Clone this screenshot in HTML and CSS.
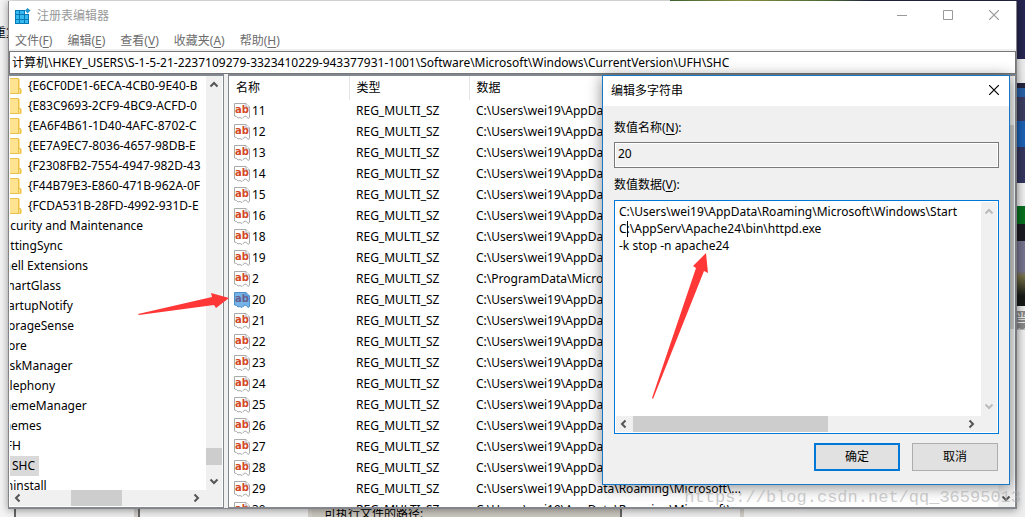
FILE: index.html
```html
<!DOCTYPE html>
<html lang="zh-CN">
<head>
<meta charset="utf-8">
<title>注册表编辑器</title>
<link rel="stylesheet" href="styles.css">
</head>
<body>
<svg class="defs" width="0" height="0" aria-hidden="true">
  <symbol id="ab" viewBox="0 0 16 16">
    <path class="sheet" d="M.5 .5H12L15.5 4V14.500L14 15.500L12.500 13.500L11 13L9 14.500L8 15.500L6 14.500L4 15L2.500 13.500L.5 13Z"/>
    <path class="sheet" d="M12 .5V4H15.500"/>
    <text x="1" y="10" class="ab-text">ab</text>
  </symbol>
  <symbol id="folder" viewBox="0 0 16 16"><path d="M0 1H14V11H16V15.500H0Z" fill="#ffe391"/><path d="M0 .5H12.500V15.500H0M12.500 10.500H14.500V15.500H12.500" fill="none" stroke="#e8c04a"/></symbol>
  <symbol id="up" viewBox="0 0 10 10"><path d="M1.500 6.500L5 3L8.500 6.500" fill="none" stroke="currentColor" stroke-width="2"/></symbol>
  <symbol id="down" viewBox="0 0 10 10"><path d="M1.500 3.500L5 7L8.500 3.500" fill="none" stroke="currentColor" stroke-width="2"/></symbol>
  <symbol id="left" viewBox="0 0 10 10"><path d="M6.500 1.500L3 5L6.500 8.500" fill="none" stroke="currentColor" stroke-width="2"/></symbol>
  <symbol id="right" viewBox="0 0 10 10"><path d="M3.500 1.500L7 5L3.500 8.500" fill="none" stroke="currentColor" stroke-width="2"/></symbol>
  <symbol id="close" viewBox="0 0 10 10"><path d="M0 0L10 10M10 0L0 10" fill="none" stroke="currentColor" stroke-width="1.200"/></symbol>
</svg>

<div class="backdrop" aria-hidden="true">
  <span class="back-text">重复</span>
  <div class="strip-top"></div>
  <div class="strip-right"><i class="navy"></i><i class="pale"></i><i class="site"></i><i class="gap"></i><i class="photo"></i><i class="caption">当前</i><i class="rest"></i></div>
  <div class="strip-bottom"><i></i><i></i><span>可执行文件的路径:</span><i></i></div>
</div>

<main class="window">
  <header class="titlebar">
    <svg class="app-icon" viewBox="0 0 16 16"><path d="M0 2H10V6H14V16H0Z" fill="#0879b5"/><path d="M1 3H4V6H1ZM5 3H9V6H5ZM1 7H4V11H1ZM5 7H9V11H5ZM10 7H13V11H10ZM1 12H4V15H1ZM5 12H9V15H5ZM10 12H13V15H10Z" fill="#35b9f1"/><path d="M12.500 0L15.500 2.500L12.500 5.500L10 2.500Z" fill="#2496d0"/></svg>
    <h1>注册表编辑器</h1>
    <div class="controls">
      <button aria-label="最小化"><svg viewBox="0 0 10 10"><path d="M0 5.500H10" stroke="currentColor"/></svg></button>
      <button aria-label="最大化"><svg viewBox="0 0 10 10"><path d="M.5 .5H9.500V9.500H.5Z" fill="none" stroke="currentColor"/></svg></button>
      <button aria-label="关闭"><svg><use href="#close"/></svg></button>
    </div>
  </header>
  <nav class="menu">
    <button>文件(<u>F</u>)</button><button>编辑(<u>E</u>)</button><button>查看(<u>V</u>)</button><button>收藏夹(<u>A</u>)</button><button>帮助(<u>H</u>)</button>
  </nav>
  <input class="address" aria-label="地址" value="计算机\HKEY_USERS\S-1-5-21-2237109279-3323410229-943377931-1001\Software\Microsoft\Windows\CurrentVersion\UFH\SHC">
  <div class="panes">
    <section class="pane tree-pane">
      <ul class="tree">
        <li class="key"><svg><use href="#folder"/></svg>{E6CF0DE1-6ECA-4CB0-9E40-B</li>
        <li class="key"><svg><use href="#folder"/></svg>{E83C9693-2CF9-4BC9-ACFD-0</li>
        <li class="key"><svg><use href="#folder"/></svg>{EA6F4B61-1D40-4AFC-8702-C</li>
        <li class="key"><svg><use href="#folder"/></svg>{EE7A9EC7-8036-4657-98DB-E</li>
        <li class="key"><svg><use href="#folder"/></svg>{F2308FB2-7554-4947-982D-43</li>
        <li class="key"><svg><use href="#folder"/></svg>{F44B79E3-E860-471B-962A-0F</li>
        <li class="key"><svg><use href="#folder"/></svg>{FCDA531B-28FD-4992-931D-E</li>
        <li>Security and Maintenance</li>
        <li>SettingSync</li>
        <li>Shell Extensions</li>
        <li>SmartGlass</li>
        <li>StartupNotify</li>
        <li>StorageSense</li>
        <li>Store</li>
        <li>TaskManager</li>
        <li>Telephony</li>
        <li>ThemeManager</li>
        <li>Themes</li>
        <li>UFH</li>
        <li class="child"><span>SHC</span></li>
        <li>Uninstall</li>
      </ul>
      <div class="vbar"><svg><use href="#up"/></svg><i class="track"></i><i class="thumb tree-thumb"></i><i class="tree-end"></i><svg><use href="#down"/></svg></div>
      <div class="hbar"><svg><use href="#left"/></svg><i class="h-start"></i><i class="thumb h-thumb"></i><i class="track"></i><svg><use href="#right"/></svg></div>
    </section>
    <section class="pane list-pane">
      <div class="list">
        <table>
          <thead><tr><th>名称</th><th>类型</th><th>数据</th></tr></thead>
          <tbody id="values">
          </tbody>
        </table>
      </div>
      <div class="vbar list-bar"><svg><use href="#up"/></svg><i class="list-start"></i><i class="thumb list-thumb"></i><i class="track"></i><svg><use href="#down"/></svg></div>
    </section>
  </div>
</main>

<form class="dialog" role="dialog" aria-labelledby="dialog-title">
  <header><h2 id="dialog-title">编辑多字符串</h2><button type="button" aria-label="关闭"><svg><use href="#close"/></svg></button></header>
  <div class="dialog-body">
    <label for="value-name">数值名称(<u>N</u>):</label>
    <input id="value-name" value="20" readonly>
    <label for="value-data">数值数据(<u>V</u>):</label>
    <div class="editor">
      <textarea id="value-data" wrap="off" spellcheck="false">C:\Users\wei19\AppData\Roaming\Microsoft\Windows\Start Menu
C:\AppServ\Apache24\bin\httpd.exe
-k stop -n apache24</textarea>
      <div class="vbar disabled"><svg><use href="#up"/></svg><i class="track"></i><svg><use href="#down"/></svg></div>
      <div class="hbar"><svg><use href="#left"/></svg><i class="thumb editor-thumb"></i><i class="track"></i><svg><use href="#right"/></svg></div>
      <i class="caret"></i>
    </div>
    <div class="actions"><button type="button" class="primary">确定</button><button type="button">取消</button></div>
  </div>
</form>

<svg class="arrow arrow-one" viewBox="0 0 91 22" aria-hidden="true"><path d="M0 21L74 4L73 0L91 5L78 15L76 12L1 22Z"/></svg>
<svg class="arrow arrow-two" viewBox="0 0 64 146" aria-hidden="true"><path d="M0 145L44 15L41 13L54 0L56 20L52 18L1 146Z"/></svg>
<div class="watermark">https://blog.csdn.net/qq_36595013</div>
<script src="values.js"></script>
</body>
</html>
```
FILE: values.js
```js
const names = [11, 12, 13, 14, 15, 16, 18, 19, 2, 20, 21, 22, 23, 24, 25, 26, 27, 28, 29, 30];
document.getElementById("values").innerHTML = names.map(name => {
  const path = name === 2 ? "C:\\ProgramData\\Microsoft\\Windows..." : "C:\\Users\\wei19\\AppData\\Roaming\\Microsoft\\...";
  return `<tr class="${name === 20 ? "selected" : ""}"><td><span><svg><use href="#ab"/></svg>${name}</span></td><td>REG_MULTI_SZ</td><td>${path}</td></tr>`;
}).join("");
```
FILE: styles.css
```css
* { box-sizing: border-box; }
body, button, input, textarea { font: 12px/16px "Noto Sans", "Noto Sans CJK SC", sans-serif; color: #000; }
body { margin: 0; padding: 1px 8px 8px; height: 100vh; display: flex; overflow: hidden; position: relative; background: #f4f4f4; }
button { border: 0; padding: 0; background: none; }
h1, h2 { margin: 0; font-size: 12px; font-weight: 400; }
i { font-style: normal; }
u { text-underline-offset: 2px; }
.defs { position: absolute; }

.backdrop { position: absolute; inset: 0; overflow: hidden; }
.back-text { position: absolute; left: -6px; top: 25px; }
.strip-top { position: absolute; inset: 0 0 auto 670px; height: 2px; background: linear-gradient(90deg, #49733a, #9ca74d 20%, #557a3c 45%, #252748 56%); }
.strip-right { position: absolute; top: 0; right: 0; bottom: 0; width: 9px; display: flex; flex-direction: column; background: #eee; }
.strip-right i { flex: none; }
.navy { height: 59px; background: #252550; }
.pale { height: 24px; background: #ededed; }
.site { height: 100px; background: linear-gradient(#23243f 0 5%, #2961a7 5% 14%, #3b3e62 14% 38%, #1c61b5 38% 64%, #34365f 64%); }
.gap { height: 23px; background: #efefef; }
.photo { height: 100px; background: linear-gradient(#087020 0 18%, #1c1a22 18% 35%, #76738f 35% 65%, #777146 70%, #171b18 90%); }
.caption { height: 18px; margin-top: 5px; overflow: hidden; color: #eee; background: #888; }
.rest { height: 220px; border-top: 1px solid #bbb; }
.strip-bottom { position: absolute; bottom: 0; left: 14px; right: 0; height: 9px; display: flex; overflow: hidden; background: #eee; }
.strip-bottom i { width: 124px; border-left: 2px solid #666; border-right: 4px solid #d1cec8; }
.strip-bottom i:nth-child(2) { width: 174px; }
.strip-bottom span { width: 308px; padding-left: 12px; background: #cbc7bf; line-height: 12px; }

.window { position: relative; flex: 1; min-width: 0; display: flex; flex-direction: column; background: #fff; border: 1px solid #858589; border-top: 0; box-shadow: 0 1px 8px #0006; }
.titlebar { display: flex; align-items: center; height: 30px; flex: none; padding-left: 6px; }
.app-icon { width: 16px; height: 16px; margin-right: 6px; }
.titlebar h1 { flex: 1; color: #999; }
.controls { display: flex; margin-right: -1px; }
.controls button { width: 46px; color: #999; }
.controls svg, .dialog header svg { width: 10px; height: 10px; display: inline-block; overflow: visible; }
.menu { display: flex; gap: 15px; height: 20px; flex: none; padding: 1px 6px 0; border-bottom: 2px solid #f0f0f0; }
.menu button { color: #6d6d6d; height: 18px; }
.address { flex: none; width: 100%; height: 23px; border: 1px solid #777; padding: 0 2px 2px; }
.panes { flex: 1; min-height: 0; display: flex; gap: 4px; background: #f0f0f0; }
.pane { background: #fff; border: 1px solid #828790; border-top-width: 2px; min-height: 0; overflow: hidden; }
.tree-pane { flex: none; width: 215px; border-left: 0; display: grid; grid-template: minmax(0, 1fr) 16px / minmax(0, 1fr) 16px; padding: 0 1px 1px; }
.tree { list-style: none; margin: 0; padding: 0; overflow: hidden; }
.tree li { height: 20px; line-height: 20px; margin-left: -13px; white-space: nowrap; }
.tree .key { display: flex; align-items: center; gap: 6px; margin-left: -4px; }
.key svg { width: 16px; height: 16px; flex: none; }
.tree .child { margin-left: 0; }
.child span { display: inline-block; padding: 0 4px 0 2px; background: #d9d9d9; }
.vbar, .hbar { display: flex; background: #f0f0f0; align-items: center; color: #555; }
.vbar { flex-direction: column; padding: 4px 0; }
.hbar { grid-column: 1 / -1; padding: 0 21px 0 3px; }
.vbar svg, .hbar svg { width: 10px; height: 10px; flex: none; }
.track { flex: 1; }
.thumb { background: #cdcdcd; flex: none; }
.vbar .thumb { width: 100%; }
.hbar .thumb { height: 100%; }
.tree-thumb { height: 17px; }
.tree-end { height: 11px; }
.h-start { width: 48px; }
.h-thumb { width: 51px; }

.list-pane { flex: 1; min-width: 0; display: flex; padding-right: 1px; }
.list { flex: 1; min-width: 0; overflow: hidden; }
table { border-collapse: collapse; table-layout: fixed; width: 100%; }
th, td { padding: 0 7px; text-align: left; font-weight: 400; white-space: nowrap; }
th { height: 24px; border-right: 1px solid #e5e5e5; }
th:nth-child(1), th:nth-child(2) { width: 120px; }
td { height: 21px; }
td span { display: flex; align-items: center; gap: 2px; margin-left: -2px; }
td svg { width: 16px; height: 16px; }
.sheet { fill: var(--sheet, #fff); stroke: var(--edge, #aaa); }
.ab-text { font: bold 10px "DejaVu Sans", sans-serif; fill: var(--letters, #d34727); }
.selected { --sheet: #75b3e8; --edge: #4b8fc9; --letters: #695f8c; }
.list-bar { width: 16px; }
.list-start { height: 35px; }
.list-thumb { height: 204px; }

.dialog { position: absolute; top: 75px; right: 15px; width: 408px; background: #f0f0f0; border: 1px solid #1778ca; box-shadow: 0 2px 14px #0007; }
.dialog header { height: 30px; display: flex; align-items: center; justify-content: space-between; padding: 0 10px 0 8px; background: #fff; }
.dialog-body { padding: 12px 10px 13px 11px; display: flex; flex-direction: column; }
.dialog label { line-height: 20px; }
#value-name { height: 26px; margin: 4px 0 7px; padding: 0 3px 3px; border: 1px solid #7a7a7a; background: #f0f0f0; box-shadow: inset 0 0 0 1px #fff; }
.editor { position: relative; height: 234px; margin-top: 5px; padding: 1px; display: grid; grid-template: minmax(0, 1fr) 16px / minmax(0, 1fr) 16px; background: #fff; border: 1px solid #0078d7; }
textarea { resize: none; border: 0; outline: 0; margin-right: 21px; padding: 1px 0 0 3px; overflow: hidden; line-height: 17px; }
.vbar.disabled { color: #bbb; }
.editor .vbar { padding: 5px 0; }
.editor-thumb { width: 195px; margin-left: 4px; }
.caret { position: absolute; left: 12px; top: 20px; width: 1px; height: 16px; background: #000; }
.actions { display: flex; justify-content: flex-end; gap: 12px; margin: 9px 1px 0 0; }
.actions button { width: 86px; height: 28px; background: #e1e1e1; border: 1px solid #adadad; }
.actions .primary { border: 2px solid #0078d7; }

.arrow { position: absolute; fill: #ff3737; }
.arrow-one { left: 138px; top: 293px; width: 91px; height: 22px; }
.arrow-two { left: 652px; top: 253px; width: 64px; height: 146px; }
.watermark { position: absolute; right: 4px; bottom: 9px; font: 17px/20px "Liberation Mono", monospace; color: #aaa9; }
```
